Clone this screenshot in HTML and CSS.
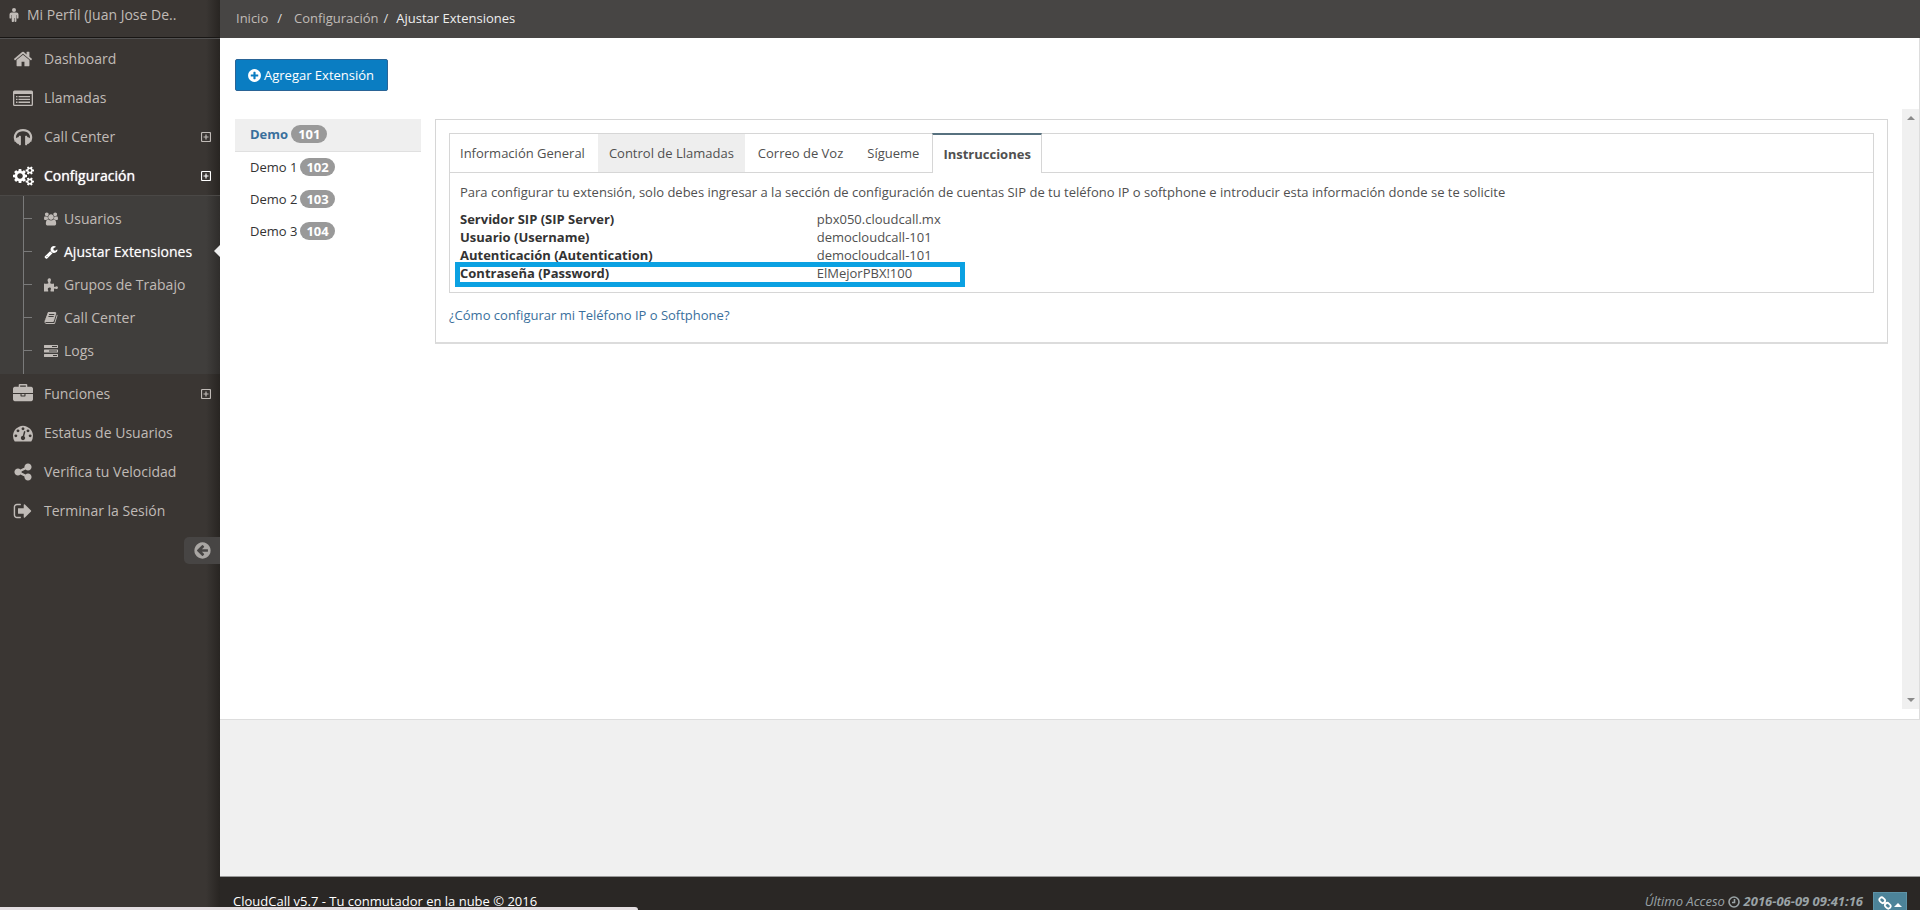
FILE: index.html
```html
<!DOCTYPE html>
<html lang="es">
<head>
<meta charset="utf-8">
<title>CloudCall - Ajustar Extensiones</title>
<link rel="stylesheet" href="styles.css">
</head>
<body>
<svg class="defs" aria-hidden="true">
<symbol id="plusbox" viewBox="0 0 10 10"><path d="M1.500 .5h7a1 1 0 0 1 1 1v7a1 1 0 0 1-1 1h-7a1 1 0 0 1-1-1v-7a1 1 0 0 1 1-1zM5 2.500v5M2.500 5h5" fill="none" stroke="currentColor" stroke-width="1.200"/></symbol>
</svg>
<div class="app">
<aside class="sidebar">
  <a class="profile" href="#">
    <svg class="i-male" viewBox="0 0 10 14"><circle cx="5" cy="2" r="2"/><path d="M2.500 4.500h5a2 2 0 0 1 2 2v3.200a.8.8 0 0 1-1.700 0V7h-.4v6a.9.9 0 0 1-1.900 0v-3H5v3a.9.9 0 0 1-2.300 0V7h-.4v2.700a.8.8 0 0 1-1.800 0V6.500a2 2 0 0 1 2-2z"/></svg>
    <span>Mi Perfil (Juan Jose De..</span>
  </a>
  <nav class="menu">
    <a class="item" href="#"><span class="ico"><svg viewBox="0 0 1792 1792"><path d="M1472 992v480q0 26-19 45t-45 19h-384v-384h-256v384h-384q-26 0-45-19t-19-45v-480q0-1 .5-3t.5-3l575-474 575 474q1 2 1 6zm223-69l-62 74q-8 9-21 11h-3q-13 0-21-7l-692-577-692 577q-12 8-24 7-13-2-21-11l-62-74q-8-10-7-23.500t11-21.500l719-599q32-26 76-26t76 26l244 204v-195q0-14 9-23t23-9h192q14 0 23 9t9 23v408l219 182q10 8 11 21.500t-7 23.500z"/></svg></span>Dashboard</a>
    <a class="item" href="#"><span class="ico"><svg viewBox="0 0 20 20"><path fill-rule="evenodd" d="M1.500 2.500h17q1.500 0 1.500 1.500v12.500q0 1.500-1.500 1.500h-17q-1.500 0-1.500-1.500v-12.500q0-1.500 1.500-1.500zM1.300 6v10.200q0 .5.500.500h16.400q.5 0 .5-.5v-10.200z"/><path d="M3 8h1.500v1.300h-1.500zM5.500 8h11.500v1.300h-11.500zM3 10.800h1.500v1.300h-1.500zM5.500 10.800h11.500v1.300h-11.500zM3 13.600h1.500v1.300h-1.500zM5.500 13.600h11.500v1.300h-11.500z"/></svg></span>Llamadas</a>
    <a class="item" href="#"><span class="ico"><svg viewBox="0 0 20 20"><path d="M2.800 14.500C0 8 4 3.100 10 3.100S20 8 17.200 14.500" fill="none" stroke="currentColor" stroke-width="2.200"/><path d="M1.800 12.500q1.500-2.300 4-2.500v-.6q0-.6.600-.6h.9q.6 0 .6.600v8.200q0 .6-.6.600h-.9q-.6 0-.6-.6v-.5q-3-.2-4-4.600zM18.200 12.500q-1.500-2.300-4-2.500v-.6q0-.6-.6-.6h-.9q-.6 0-.6.600v8.200q0 .6.600.600h.9q.6 0 .6-.6v-.5q3-.2 4-4.600z"/></svg></span>Call Center<svg class="plus"><use href="#plusbox"/></svg></a>
    <a class="item on" href="#"><span class="ico"><svg class="wide" viewBox="0 0 1920 1792"><path d="M896 896q0-106-75-181t-181-75-181 75-75 181 75 181 181 75 181-75 75-181zm768 512q0-52-38-90t-90-38-90 38-38 90q0 53 37.500 90.500t90.500 37.500 90.500-37.500 37.500-90.500zm0-1024q0-52-38-90t-90-38-90 38-38 90q0 53 37.500 90.500t90.500 37.500 90.500-37.500 37.500-90.500zm-384 421v185q0 10-7 19.500t-16 10.500l-155 24q-11 35-32 76 34 48 90 115 7 11 7 20 0 12-7 19-23 30-82.500 89.500t-78.500 59.500q-11 0-21-7l-115-90q-37 19-77 31-11 108-23 155-7 24-30 24h-186q-11 0-20-7.500t-10-17.500l-23-153q-34-10-75-31l-118 89q-7 7-20 7-11 0-21-8-144-133-144-160 0-9 7-19 10-14 41-53t47-61q-23-44-35-82l-152-24q-10-1-17-9.500t-7-19.500v-185q0-10 7-19.500t16-10.500l155-24q11-35 32-76-34-48-90-115-7-11-7-20 0-12 7-20 22-30 82-89t79-59q11 0 21 7l115 90q34-18 77-32 11-108 23-154 7-24 30-24h186q11 0 20 7.500t10 17.500l23 153q34 10 75 31l118-89q8-7 20-7 11 0 21 8 144 133 144 160 0 8-7 19-12 16-42 54t-45 60q23 48 34 82l152 23q10 2 17 10.500t7 19.500zm640 533v140q0 16-149 31-12 27-30 52 51 113 51 138 0 4-4 7-122 71-124 71-8 0-46-47t-52-68q-20 2-30 2t-30-2q-14 21-52 68t-46 47q-2 0-124-71-4-3-4-7 0-25 51-138-18-25-30-52-149-15-149-31v-140q0-16 149-31 13-29 30-52-51-113-51-138 0-4 4-7 4-2 35-20t59-34 30-16q8 0 46 46.500t52 67.500q20-2 30-2t30 2q51-71 92-112l6-2q4 0 124 70 4 3 4 7 0 25-51 138 17 23 30 52 149 15 149 31zm0-1024v140q0 16-149 31-12 27-30 52 51 113 51 138 0 4-4 7-122 71-124 71-8 0-46-47t-52-68q-20 2-30 2t-30-2q-14 21-52 68t-46 47q-2 0-124-71-4-3-4-7 0-25 51-138-18-25-30-52-149-15-149-31v-140q0-16 149-31 13-29 30-52-51-113-51-138 0-4 4-7 4-2 35-20t59-34 30-16q8 0 46 46.500t52 67.500q20-2 30-2t30 2q51-71 92-112l6-2q4 0 124 70 4 3 4 7 0 25-51 138 17 23 30 52 149 15 149 31z"/></svg></span>Configuración<svg class="plus"><use href="#plusbox"/></svg></a>
    <div class="submenu">
      <a class="sub" href="#"><svg viewBox="0 0 1920 1792"><path d="M593 896q-162 5-265 128h-134q-82 0-138-40.500t-56-118.500q0-353 124-353 6 0 43.500 21t97.500 42.500 119 21.500q67 0 133-23-5 37-5 66 0 139 81 256zm1071 637q0 120-73 189.500t-194 69.500h-874q-121 0-194-69.500t-73-189.500q0-53 3.500-103.500t14-109 26.500-108.500 43-97.500 62-81 85.500-53.500 111.500-20q10 0 43 21.500t73 48 107 48 135 21.500 135-21.500 107-48 73-48 43-21.500q61 0 111.500 20t85.500 53.500 62 81 43 97.500 26.500 108.500 14 109 3.500 103.500zm-1024-1277q0 106-75 181t-181 75-181-75-75-181 75-181 181-75 181 75 75 181zm704 384q0 159-112.500 271.500t-271.500 112.500-271.500-112.500-112.500-271.500 112.500-271.500 271.500-112.500 271.500 112.500 112.500 271.500zm576 225q0 78-56 118.500t-138 40.500h-134q-103-123-265-128 81-117 81-256 0-29-5-66 66 23 133 23 59 0 119-21.500t97.500-42.500 43.500-21q124 0 124 353zm-128-609q0 106-75 181t-181 75-181-75-75-181 75-181 181-75 181 75 75 181z"/></svg>Usuarios</a>
      <a class="sub on" href="#"><svg viewBox="0 0 1792 1792"><path d="M448 1472q0-26-19-45t-45-19-45 19-19 45 19 45 45 19 45-19 19-45zm644-420l-682 682q-37 37-90 37-52 0-91-37l-106-108q-38-36-38-90 0-53 38-91l681-681q39 98 114.500 173.500t173.500 114.500zm634-435q0 39-23 106-47 134-164.500 217.500t-258.500 83.500q-185 0-316.500-131.500t-131.500-316.500 131.500-316.500 316.500-131.500q58 0 121.500 16.500t107.500 46.500q16 11 16 28t-16 28l-293 169v224l193 107q5-3 79-48.500t135.500-81 70.500-35.500q15 0 23.500 10t8.500 25z"/></svg>Ajustar Extensiones</a>
      <a class="sub" href="#"><svg viewBox="0 0 14 14"><path d="M0 5.500q2 .6 4 0q.6-.3.200-1.300-1-1.800-.4-2.900Q4.400.1 5.400.2q1.200 0 1.500 1.200.2 1-.4 2.200-.6 1.500.1 1.900 1.500.5 3.400 0v2.700q.2 1.200 1.300.600 1.200-.8 2.100-.2.700.6.500 1.500-.2 1-1.300 1-.7 0-1.500-.5-.9-.3-1.100.4v2.500H6.700q-.5-1 .1-2 .5-1.400-.6-1.900-1.200-.4-2 .3-.7.800-.2 2 .5 1 .1 1.600H0z"/></svg>Grupos de Trabajo</a>
      <a class="sub" href="#"><svg viewBox="0 0 1792 1792"><path d="M1703 478q40 57 18 129l-275 906q-19 64-76.500 107.500t-122.500 43.500h-923q-77 0-148.500-53.500t-99.500-131.500q-24-67-2-127 0-4 3-27t4-37q1-8-3-21.500t-3-19.500q2-11 8-21t16.500-23.500 16.500-23.500q23-38 45-91.500t30-91.500q3-10 .5-30t-.5-28q3-11 17-28t17-23q21-36 42-92t25-90q1-9-2.500-32t.5-28q4-13 22-30.500t22-22.500q19-26 42.500-84.500t27.500-96.500q1-8-3-25.500t-2-26.500q2-8 9-18t18-23 17-21q8-12 16.500-30.500t15-35 16-36 19.500-32 26.500-23.500 36-11.500 47.500 5.500l-1 3q38-9 51-9h761q74 0 114 56t18 130l-274 906q-36 119-71.500 153.500t-128.500 34.500h-869q-27 0-38 15-11 16-1 43 24 70 144 70h923q29 0 56-15.500t35-41.500l300-987q7-22 5-57 38 15 59 43zm-1064 2q-4 13 2 22.500t20 9.500h608q13 0 25.500-9.500t16.500-22.500l21-64q4-13-2-22.500t-20-9.500h-608q-13 0-25.500 9.500t-16.500 22.500zm-83 256q-4 13 2 22.500t20 9.500h608q13 0 25.500-9.500t16.500-22.500l21-64q4-13-2-22.500t-20-9.500h-608q-13 0-25.500 9.500t-16.500 22.500z"/></svg>Call Center</a>
      <a class="sub" href="#"><svg viewBox="0 0 14 14"><path fill-rule="evenodd" d="M.5 1h13q.5 0 .5.500v2q0 .5-.5.500h-13Q0 4 0 3.500v-2Q0 1 .5 1zM8 2v1h5v-1zM.5 5.500h13q.5 0 .5.500v2q0 .5-.5.500h-13Q0 8.500 0 8V6q0-.5.5-.5zM5 6.500v1h8v-1zM.5 10h13q.5 0 .5.500v2q0 .5-.5.500h-13Q0 13 0 12.500v-2q0-.5.5-.5zM9 11v1h4v-1z"/></svg>Logs</a>
    </div>
    <a class="item" href="#"><span class="ico"><svg viewBox="0 0 1792 1792"><path d="M640 256h512v-128h-512v128zm1152 640v480q0 66-47 113t-113 47h-1472q-66 0-113-47t-47-113v-480h672v160q0 26 19 45t45 19h320q26 0 45-19t19-45v-160h672zm-768 0v128h-256v-128h256zm768-480v384h-1792v-384q0-66 47-113t113-47h352v-160q0-40 28-68t68-28h576q40 0 68 28t28 68v160h352q66 0 113 47t47 113z"/></svg></span>Funciones<svg class="plus"><use href="#plusbox"/></svg></a>
    <a class="item" href="#"><span class="ico"><svg viewBox="0 0 1792 1792"><path d="M384 1152q0-53-37.500-90.500t-90.500-37.500-90.500 37.500-37.500 90.500 37.500 90.500 90.500 37.500 90.500-37.500 37.500-90.500zm192-448q0-53-37.500-90.500t-90.500-37.500-90.500 37.500-37.500 90.500 37.500 90.500 90.500 37.500 90.500-37.500 37.500-90.500zm428 481l101-382q6-26-7.500-48.500t-38.500-29.500-48 6.500-30 39.500l-101 382q-60 5-107 43.500t-63 98.500q-20 77 20 146t117 89 146-20 89-117q16-60-6-117t-72-91zm660-33q0-53-37.500-90.500t-90.500-37.500-90.500 37.500-37.500 90.500 37.500 90.500 90.500 37.500 90.500-37.500 37.500-90.500zm-640-640q0-53-37.500-90.500t-90.500-37.500-90.500 37.500-37.500 90.500 37.500 90.500 90.500 37.500 90.500-37.500 37.500-90.500zm448 192q0-53-37.500-90.500t-90.500-37.500-90.500 37.500-37.500 90.500 37.500 90.500 90.500 37.500 90.500-37.500 37.500-90.500zm320 448q0 261-141 483-19 29-54 29h-1402q-35 0-54-29-141-221-141-483 0-182 71-348t191-286 286-191 348-71 348 71 286 191 191 286 71 348z"/></svg></span>Estatus de Usuarios</a>
    <a class="item" href="#"><span class="ico"><svg viewBox="0 0 1792 1792"><path d="M1344 1024q133 0 226.500 93.500t93.500 226.500-93.500 226.500-226.500 93.500-226.500-93.500-93.500-226.500q0-12 2-34l-360-180q-92 86-218 86-133 0-226.500-93.500t-93.500-226.500 93.500-226.500 226.500-93.500q126 0 218 86l360-180q-2-22-2-34 0-133 93.500-226.500t226.500-93.500 226.500 93.500 93.500 226.500-93.500 226.500-226.500 93.500q-126 0-218-86l-360 180q2 22 2 34t-2 34l360 180q92-86 218-86z"/></svg></span>Verifica tu Velocidad</a>
    <a class="item" href="#"><span class="ico"><svg viewBox="0 0 1792 1792"><path d="M704 1440q0 4 1 20t.5 26.500-3 23.500-10 19.500-20.500 6.500h-320q-119 0-203.500-84.500t-84.500-203.500v-704q0-119 84.500-203.500t203.500-84.500h320q13 0 22.500 9.500t9.500 22.500q0 4 1 20t.5 26.500-3 23.500-10 19.500-20.500 6.500h-320q-66 0-113 47t-47 113v704q0 66 47 113t113 47h312l11.500 1 11.500 3 8 5.500 7 9 2 13.500zm928-544q0 26-19 45l-544 544q-19 19-45 19t-45-19-19-45v-288h-448q-26 0-45-19t-19-45v-384q0-26 19-45t45-19h448v-288q0-26 19-45t45-19 45 19l544 544q19 19 19 45z"/></svg></span>Terminar la Sesión</a>
  </nav>
  <button class="collapse" aria-label="Contraer menú"><svg viewBox="0 0 1792 1792"><path d="M1408 960v-128q0-26-19-45t-45-19h-502l189-189q19-19 19-45t-19-45l-91-91q-18-18-45-18t-45 18l-362 362-91 91q-18 18-18 45t18 45l91 91 362 362q18 18 45 18t45-18l91-91q18-18 18-45t-18-45l-189-189h502q26 0 45-19t19-45zm256-64q0 209-103 385.500t-279.500 279.500-385.500 103-385.500-103-279.500-279.500-103-385.500 103-385.500 279.500-279.500 385.500-103 385.500 103 279.500 279.500 103 385.500z"/></svg></button>
</aside>
<div class="page">
  <nav class="crumbs"><a href="#">Inicio</a><span class="sep wide">/</span><a href="#">Configuración</a><span class="sep">/</span><span class="here">Ajustar Extensiones</span></nav>
  <main class="content">
    <div class="toolbar"><button class="add"><svg viewBox="0 0 1792 1792"><path d="M1344 960v-128q0-26-19-45t-45-19h-256v-256q0-26-19-45t-45-19h-128q-26 0-45 19t-19 45v256h-256q-26 0-45 19t-19 45v128q0 26 19 45t45 19h256v256q0 26 19 45t45 19h128q26 0 45-19t19-45v-256h256q26 0 45-19t19-45zm320-64q0 209-103 385.500t-279.500 279.500-385.500 103-385.500-103-279.500-279.500-103-385.500 103-385.500 279.500-279.500 385.500-103 385.500 103 279.500 279.500 103 385.500z"/></svg>Agregar Extensión</button></div>
    <div class="frame">
      <div class="split">
        <nav class="exts">
          <a class="on" href="#">Demo <span class="badge">101</span></a>
          <a href="#">Demo 1 <span class="badge">102</span></a>
          <a href="#">Demo 2 <span class="badge">103</span></a>
          <a href="#">Demo 3 <span class="badge">104</span></a>
        </nav>
        <section class="panel">
          <div class="box">
            <div class="tabs" role="tablist">
              <button role="tab">Información General</button>
              <button role="tab" class="hover">Control de Llamadas</button>
              <button role="tab">Correo de Voz</button>
              <button role="tab">Sígueme</button>
              <button role="tab" class="on" aria-selected="true">Instrucciones</button>
            </div>
            <div class="body">
              <p>Para configurar tu extensión, solo debes ingresar a la sección de configuración de cuentas SIP de tu teléfono IP o softphone e introducir esta información donde se te solicite</p>
              <dl class="data">
                <dt>Servidor SIP (SIP Server)</dt><dd>pbx050.cloudcall.mx</dd>
                <dt>Usuario (Username)</dt><dd>democloudcall-101</dd>
                <dt>Autenticación (Autentication)</dt><dd>democloudcall-101</dd>
                <dt>Contraseña (Password)</dt><dd>ElMejorPBX!100</dd>
              </dl>
              <div class="mark"></div>
            </div>
          </div>
          <a class="help" href="#">¿Cómo configurar mi Teléfono IP o Softphone?</a>
        </section>
      </div>
      <div class="scroll"><i class="up"></i><i class="down"></i></div>
    </div>
  </main>
  <div class="rest"></div>
  <footer class="footer">
    <span class="copy">CloudCall v5.7 - Tu conmutador en la nube © 2016</span>
    <span class="last"><em>Último Acceso <svg viewBox="0 0 12 12"><path d="M6 1a5 5 0 1 1 0 10A5 5 0 0 1 6 1zM6.500 3v3.500H4" fill="none" stroke="currentColor" stroke-width="1.600"/></svg> <strong>2016-06-09 09:41:16</strong></em>
    <button class="links" aria-label="Enlaces"><svg viewBox="0 0 13 13"><g transform="rotate(45 6.500 6.500)" fill="none" stroke="currentColor" stroke-width="1.900"><rect x="-1" y="4" width="6.500" height="5" rx="2.400"/><rect x="7.500" y="4" width="6.500" height="5" rx="2.400"/><path d="M4.500 6.500h4"/></g></svg><i class="caret"></i></button></span>
  </footer>
</div>
<div class="status"></div>
</div>
</body>
</html>
```
FILE: styles.css
```css
* { box-sizing: border-box; }
body { margin: 0; font: 13px/18px "Open Sans", "Noto Sans", sans-serif; color: #505050; }
a { color: inherit; text-decoration: none; }
button { font: inherit; color: inherit; border: 0; padding: 0; background: none; }
svg { fill: currentColor; flex: none; }
.defs { position: absolute; width: 0; height: 0; }
.app { display: flex; height: 100vh; overflow: hidden; position: relative; }

.sidebar { width: 220px; flex: none; background: linear-gradient(to left, #282522, rgba(40, 37, 34, 0) 14px) #3a3633; color: #c0bbb7; font-size: 14px; display: flex; flex-direction: column; }
.profile { display: flex; align-items: center; gap: 8px; height: 38px; padding: 0 9px 8px; border-bottom: 1px solid #181614; }
.i-male { width: 10px; height: 14px; }
.menu { border-top: 1px solid #525151; }
.item { display: flex; align-items: center; height: 39px; padding: 0 9px 0 13px; }
.ico { width: 31px; display: flex; }
.ico svg { width: 20px; height: 20px; }
.ico .wide { width: 21px; }
.plus { width: 10px; height: 10px; margin-left: auto; }
.item.on, .sub.on { color: #fff; }
.item.on { text-shadow: 0 0 1px #fff; }
.submenu { position: relative; background: linear-gradient(to left, #2f2d2b, rgba(47, 45, 43, 0) 14px) #403e3c; padding: 6px 0 7px; border-top: 1px solid #4a4846; }
.submenu::before { content: ""; position: absolute; left: 23px; top: 0; bottom: 0; border-left: 1px solid #7a7a7a; }
.sub { position: relative; display: flex; align-items: center; gap: 6px; height: 33px; padding-left: 44px; }
.sub::before { content: ""; position: absolute; left: 24px; top: 16px; width: 8px; border-top: 1px solid #7a7a7a; }
.sub svg { width: 14px; height: 14px; }
.sub.on { text-shadow: 0 0 1px #aaa; }
.sub.on::after { content: ""; position: absolute; right: 0; top: 10px; border: 6px solid transparent; border-left: 0; border-right-color: #eee; }
.collapse { align-self: flex-end; width: 36px; height: 27px; margin-top: 7px; padding-left: 9px; background: #474544; border-radius: 5px 0 0 5px; color: #a9a6a3; display: flex; align-items: center; }
.collapse svg { width: 19px; height: 19px; }

.page { flex: 1; min-width: 0; display: flex; flex-direction: column; background: #f0f0f0; }
.crumbs { background: #474544; height: 38px; padding: 0 0 2px 16px; display: flex; align-items: center; color: #c0bbb7; flex: none; }
.sep { color: #ddd; margin: 0 8px 0 5px; }
.sep.wide { margin: 0 12px 0 9px; }
.here { color: #eee; }
.content { background: #fff; padding: 21px 0 10px; border-right: 1px solid #ddd; border-bottom: 1px solid #ddd; flex: none; }
.toolbar { padding-left: 15px; height: 50px; }
.add { display: flex; align-items: center; gap: 2px; height: 32px; padding: 0 13px 0 11px; background: #0a7dc2; border: 1px solid #2a6496; border-radius: 2px; color: #fff; }
.add svg { width: 15px; height: 15px; }
.frame { display: flex; height: 600px; }
.split { flex: 1; min-width: 0; display: flex; align-items: flex-start; gap: 14px; padding: 10px 14px 0 15px; }
.exts { width: 186px; flex: none; }
.exts a { display: flex; align-items: center; gap: 3px; height: 32px; padding: 0 0 2px 15px; color: #333; }
.exts .on { height: 33px; background: #efefef; border-bottom: 1px solid #e0e0e0; color: #3a6f9c; font-weight: 700; }
.badge { background: #999; color: #fff; font-weight: 700; border-radius: 9px; padding: 0 6px; line-height: 18px; }
.exts .on .badge { padding: 0 7px; }
.panel { flex: 1; min-width: 0; border: 1px solid #d6d6d6; border-bottom: 2px solid #dcdcdc; padding: 13px 13px 18px; }
.box { border: 1px solid #d6d6d6; }
.tabs { display: flex; height: 39px; border-bottom: 1px solid #d6d6d6; }
.tabs button { padding: 0 11px; }
.tabs button:first-child { padding-left: 10px; }
.tabs .hover { background: #eee; margin: 0 2px; }
.tabs button + button + button + button { margin-left: 2px; }
.tabs button.on[aria-selected] { margin: -1px 0 -1px 3px; padding: 0 10px 1px; border: 1px solid #d6d6d6; border-top: 2px solid #57717f; border-bottom: 0; background: #fff; color: #505050; font-weight: 700; }
.tabs button:nth-child(5).on { margin: -1px 0 -1px 2px; }
.body { position: relative; padding: 10px; }
p { margin: 0 0 9px; }
.data { display: grid; grid-template-columns: 25% 1fr; margin: 0; }
dt { font-weight: 700; color: #333; }
dd { margin: 0; padding-left: 6px; }
.mark { position: absolute; left: 5px; bottom: 5px; width: 510px; height: 25px; border: 5px solid #0ba1e2; }
.help { display: block; margin-top: 13px; color: #3a6f9c; }
.scroll { width: 17px; background: #f0f0f0; display: flex; flex-direction: column; justify-content: space-between; align-items: center; padding: 7px 0; }
.up, .down { border: 4px solid transparent; border-top-width: 0; border-bottom-color: #8a8a8a; }
.down { border-top: 4px solid #8a8a8a; border-bottom: 0; }
.rest { flex: 1; }
.footer { height: 34px; overflow: hidden; background: #2a2725; border-top: 1px solid #999; color: #fff; padding: 15px 13px 0; display: flex; justify-content: space-between; align-items: flex-start; }
.last { display: flex; gap: 10px; color: #9aa3a6; }
.last em svg { width: 12px; height: 12px; vertical-align: -2px; }
.links { width: 34px; height: 22px; background: #4c8399; border: 1px solid #5d92a6; color: #fff; display: flex; align-items: center; justify-content: center; gap: 3px; }
.links svg { width: 12px; height: 12px; overflow: visible; }
.caret { border: 4px solid transparent; border-top: 0; border-bottom-color: #fff; margin-top: 4px; }
.status { position: absolute; left: 0; bottom: 0; width: 638px; height: 3px; background: #e4dfe2; border-radius: 0 3px 0 0; }
```
